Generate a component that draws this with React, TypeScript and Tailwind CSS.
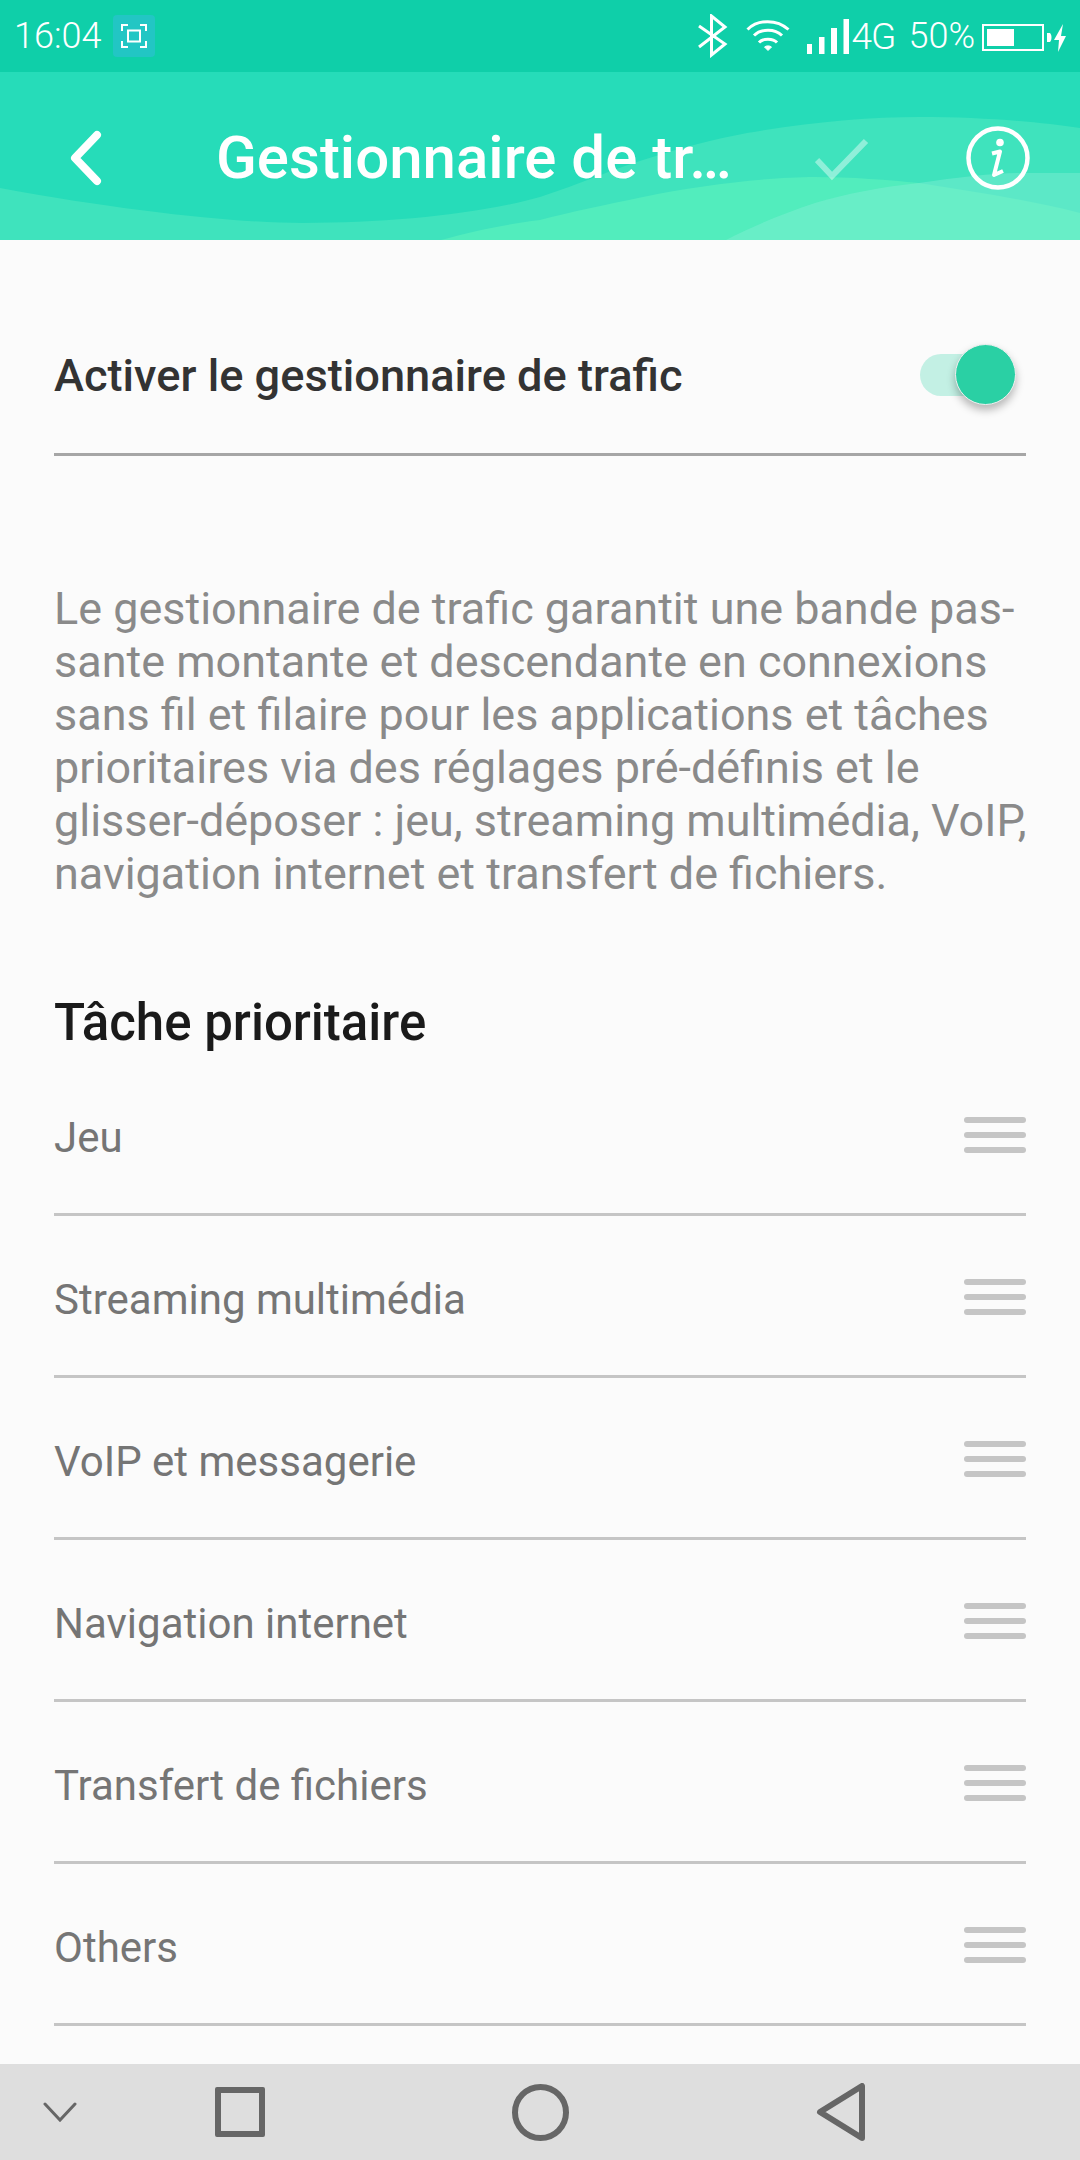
const rows = ["Jeu", "Streaming multimédia", "VoIP et messagerie", "Navigation internet", "Transfert de fichiers", "Others"];
const desc = [
  "Le gestionnaire de trafic garantit une bande pas-",
  "sante montante et descendante en connexions",
  "sans fil et filaire pour les applications et tâches",
  "prioritaires via des réglages pré-définis et le",
  "glisser-déposer : jeu, streaming multimédia, VoIP,",
  "navigation internet et transfert de fichiers.",
];

function StatusBar() {
  return (
    <div className="h-[72px] bg-[#0fcfa9] flex items-center text-white font-light shrink-0">
      <span className="ml-[14px] text-[36px] leading-none">16:04</span>
      <div className="ml-[12px] w-[42px] h-[42px] rounded-[4px] bg-[#22c6c4] flex items-center justify-center">
        <svg width="26" height="24" viewBox="0 0 26 24" fill="none" stroke="#fff" strokeWidth="2">
          <path d="M1 7V1H7M19 1H25V7M25 17V23H19M7 23H1V17" />
          <rect x="7" y="6.5" width="12" height="11" />
        </svg>
      </div>
      <div className="ml-auto flex items-center h-full">
        <svg width="36" height="44" viewBox="0 0 36 44" fill="none" stroke="#fff" strokeWidth="3">
          <path d="M6 12L32 30L18.5 41V2L32 13L6 33" />
        </svg>
        <svg className="ml-[17px]" width="44" height="36" viewBox="0 0 44 36" fill="none" stroke="#fff" strokeWidth="3">
          <path d="M1.5 11.5C12 1 31 1 42.500 11.500" />
          <path d="M8 17.500C15 10.500 29 10.500 36 17.500" />
          <path d="M13 24.500C17 20 27 20 31 24.500" />
          <path d="M18.500 29L22 32.500L25.500 29C24 27.500 20 27.500 18.500 29Z" fill="#fff" strokeWidth="1" />
        </svg>
        <svg className="ml-[17px]" width="42" height="36" viewBox="0 0 42 36" fill="#fff">
          <rect x="0" y="26" width="5" height="10" />
          <rect x="12" y="19" width="5.500" height="17" />
          <rect x="24" y="10" width="6" height="26" />
          <rect x="36.500" y="1" width="5.500" height="35" />
        </svg>
        <span className="ml-[3px] text-[37px] leading-none tracking-[-1px]">4G</span>
        <span className="ml-[13px] text-[36px] leading-none">50%</span>
        <svg className="ml-[7px] mr-[13px]" width="85" height="32" viewBox="0 0 85 32" fill="#fff">
          <rect x="1" y="5" width="60" height="25" fill="none" stroke="#fff" strokeWidth="2" />
          <rect x="5" y="9" width="27" height="17" />
          <path d="M65 13H68C70 15 70 20 68 22H65Z" />
          <path d="M81 4L72 20H77L76 32L84 16H79Z" />
        </svg>
      </div>
    </div>
  );
}

function Header() {
  return (
    <div className="relative h-[168px] bg-[#26dcb9] flex items-center shrink-0 overflow-hidden">
      <svg className="absolute inset-0" width="1080" height="168" viewBox="0 0 1080 168">
        <path d="M0 116C130 140 240 151 303 151C390 151 480 142 540 125C580 112 610 98 643 88C680 76 715 67 747 61C810 50 870 45 919 45C985 45 1040 50 1080 56V168H0Z" fill="#3fe3bd" />
        <path d="M441 168C470 160 500 153 540 148C570 140 605 133 643 125C700 113 770 105 815 105C850 105 890 108 919 111C975 120 1030 128 1080 141V168Z" fill="#52edbd" />
        <path d="M726 168C755 153 785 141 815 131C845 122 880 115 919 111C960 105 995 101 1022 101C1050 101 1070 101 1080 101V168Z" fill="#8af0d8" fillOpacity="0.4" />
      </svg>
      <svg className="relative ml-[67px] mt-[4px] shrink-0" width="36" height="58" viewBox="0 0 36 58" fill="none" stroke="#fff" strokeWidth="8" strokeLinecap="round" strokeLinejoin="round">
        <path d="M30 6L8 29L30 52" />
      </svg>
      <span className="relative ml-[113px] mt-[4px] shrink-0 text-[60px] leading-none text-white font-medium whitespace-nowrap w-[511px]">Gestionnaire de tr…</span>
      <svg className="relative ml-[88px] mt-[6px] shrink-0" width="56" height="44" viewBox="0 0 56 44" fill="none" stroke="#fff" strokeOpacity="0.42" strokeWidth="6">
        <path d="M2 23L17 39L51 4" />
      </svg>
      <svg className="relative ml-[94px] mt-[4px] shrink-0" width="66" height="66" viewBox="0 0 66 66" fill="none" stroke="#fff" strokeWidth="4.500">
        <circle cx="33" cy="33" r="29.500" />
        <circle cx="35" cy="17.500" r="3.800" fill="#fff" stroke="none" />
        <path d="M27 28.500L35 26.500L29 50L38 46" strokeWidth="4" strokeLinejoin="round" />
      </svg>
    </div>
  );
}

function DragHandle() {
  return (
    <div className="flex flex-col gap-[9px] w-[62px]">
      <div className="h-[6px] rounded-full bg-[#c5c5c5]" />
      <div className="h-[6px] rounded-full bg-[#c5c5c5]" />
      <div className="h-[6px] rounded-full bg-[#c5c5c5]" />
    </div>
  );
}

function NavBar() {
  return (
    <div className="h-[96px] bg-[#dedede] flex items-center shrink-0">
      <svg className="ml-[43px]" width="34" height="22" viewBox="0 0 34 22" fill="none" stroke="#666" strokeWidth="3" strokeLinecap="round">
        <path d="M2 3L17 19L32 3" />
      </svg>
      <div className="ml-[138px] w-[50px] h-[50px] border-[6px] border-[#666] rounded-[2px]" />
      <div className="ml-[247px] w-[57px] h-[57px] border-[6px] border-[#666] rounded-full" />
      <svg className="ml-[247px]" width="50" height="58" viewBox="0 0 50 58" fill="none" stroke="#666" strokeWidth="6" strokeLinejoin="round">
        <path d="M46 3V55L4 29Z" />
      </svg>
    </div>
  );
}

export default function App() {
  return (
    <div className="w-[1080px] h-[2160px] flex flex-col bg-[#fbfbfb] font-['Roboto',sans-serif] overflow-hidden">
      <StatusBar />
      <Header />
      <main className="flex-1 px-[54px]">
        <div className="relative h-[216px] border-b-[3px] border-[#a6a6a6] flex items-center justify-between pt-[56px]">
          <span className="mt-[3px] text-[45.200px] leading-none font-medium text-[#333]">Activer le gestionnaire de trafic</span>
          <div className="relative w-[80px] h-[42px] mr-[26px] rounded-full bg-[#c3f0e4]">
            <div className="absolute right-[-16px] top-[-10px] w-[61px] h-[61px] rounded-full bg-[#2ad0a4] border border-[#f0f0f0] shadow-[0_5px_8px_rgba(0,0,0,0.28)]" />
          </div>
        </div>
        <div className="mt-[126px] text-[44.950px] leading-[53px] text-[#8a8a8a] whitespace-nowrap">
          {desc.map((l) => (
            <div key={l}>{l}</div>
          ))}
        </div>
        <h2 className="mt-[92px] text-[51px] leading-[62px] font-medium text-[#1a1a1a]">Tâche prioritaire</h2>
        <div>
          {rows.map((r) => (
            <div key={r} className="h-[162px] pt-[3px] border-b-[3px] border-[#c5c5c5] flex items-center justify-between">
              <span className="mt-[6px] text-[42px] leading-none text-[#757575]">{r}</span>
              <DragHandle />
            </div>
          ))}
        </div>
      </main>
      <NavBar />
    </div>
  );
}
